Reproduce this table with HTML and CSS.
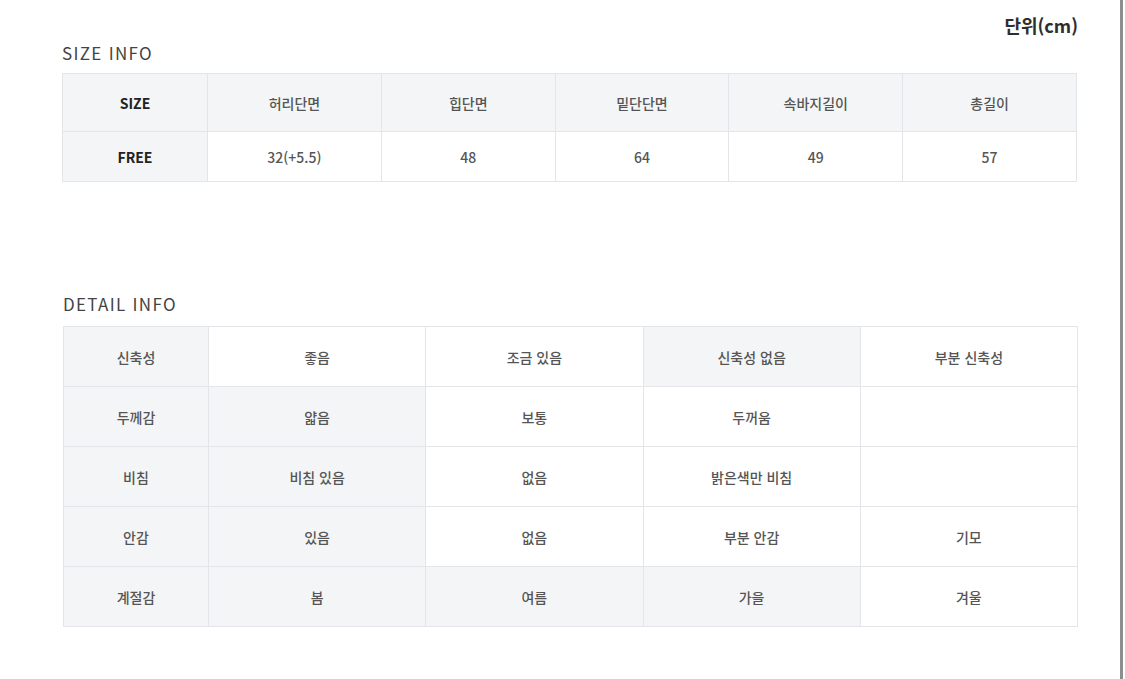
FILE: index.html
```html
<!DOCTYPE html>
<html lang="ko">
<head>
<meta charset="utf-8">
<title>Size / Detail Info</title>
<link rel="stylesheet" href="styles.css">
</head>
<body>
<div class="page">
  <div class="unit">단위(cm)</div>

  <h2 class="title title-size">SIZE INFO</h2>
  <table class="grid size-table">
    <colgroup>
      <col class="c-first">
      <col><col><col><col><col>
    </colgroup>
    <tr class="head-row">
      <td class="label strong">SIZE</td>
      <td>허리단면</td>
      <td>힙단면</td>
      <td>밑단단면</td>
      <td>속바지길이</td>
      <td>총길이</td>
    </tr>
    <tr class="data-row">
      <td class="label strong">FREE</td>
      <td>32(+5.5)</td>
      <td>48</td>
      <td>64</td>
      <td>49</td>
      <td>57</td>
    </tr>
  </table>

  <h2 class="title title-detail">DETAIL INFO</h2>
  <table class="grid detail-table">
    <colgroup>
      <col class="c-first">
      <col><col><col><col>
    </colgroup>
    <tr>
      <td class="label">신축성</td>
      <td>좋음</td>
      <td>조금 있음</td>
      <td class="on">신축성 없음</td>
      <td>부분 신축성</td>
    </tr>
    <tr>
      <td class="label">두께감</td>
      <td class="on">얇음</td>
      <td>보통</td>
      <td>두꺼움</td>
      <td></td>
    </tr>
    <tr>
      <td class="label">비침</td>
      <td class="on">비침 있음</td>
      <td>없음</td>
      <td>밝은색만 비침</td>
      <td></td>
    </tr>
    <tr>
      <td class="label">안감</td>
      <td class="on">있음</td>
      <td>없음</td>
      <td>부분 안감</td>
      <td>기모</td>
    </tr>
    <tr>
      <td class="label">계절감</td>
      <td class="on">봄</td>
      <td class="on">여름</td>
      <td class="on">가을</td>
      <td>겨울</td>
    </tr>
  </table>
</div>
</body>
</html>
```

FILE: styles.css
```css
html, body {
  margin: 0;
  padding: 0;
  background: #ffffff;
}

body {
  font-family: "Noto Sans CJK KR", "Noto Sans", sans-serif;
  color: #555555;
}

.page {
  box-sizing: border-box;
  width: 1123px;
  height: 679px;
  padding: 14px 0 0 62px;
  border-right: 3px solid #8d8d8d;
  overflow: hidden;
}

.unit {
  width: 1016px;
  text-align: right;
  font-size: 18px;
  font-weight: 700;
  line-height: 22px;
  color: #2e2e2e;
}

.title {
  margin: 0;
  font-size: 17px;
  font-weight: 400;
  line-height: 20px;
  letter-spacing: 1.3px;
  color: #444444;
}

.title-size {
  margin-top: 7px;
  margin-bottom: 10px;
}

.title-detail {
  margin-top: 112px;
  margin-bottom: 12px;
  padding-left: 1px;
}

.grid {
  border-collapse: collapse;
  table-layout: fixed;
  width: 1015px;
}

.grid col.c-first {
  width: 145px;
}

.grid td {
  border: 1px solid #e3e5e8;
  text-align: center;
  vertical-align: middle;
  font-size: 14px;
  font-weight: 500;
  color: #555555;
  padding: 0;
  background: #ffffff;
}

.size-table .head-row td {
  height: 57px;
  background: #f4f5f7;
}

.size-table .data-row td {
  height: 49px;
}

.grid td.label {
  background: #f4f5f7;
}

.grid td.strong {
  font-weight: 700;
  font-size: 14px;
  color: #222222;
}

.detail-table {
  margin-left: 1px;
}

.detail-table td {
  height: 59px;
}

.detail-table td.on {
  background: #f4f5f7;
}
```
